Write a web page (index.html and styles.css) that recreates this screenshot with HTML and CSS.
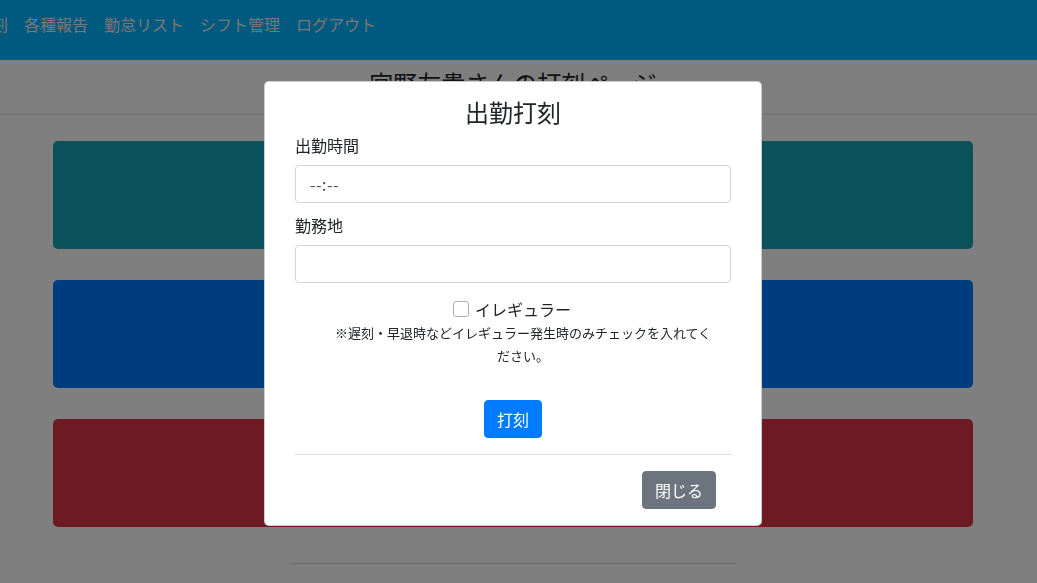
FILE: index.html
```html
<!DOCTYPE html>
<html lang="ja">
<head>
<meta charset="utf-8">
<title>打刻ページ</title>
<link rel="stylesheet" href="styles.css">
</head>
<body>
<nav class="navbar">
  <ul class="nav-list">
    <li class="nav-item">打刻</li>
    <li class="nav-item">各種報告</li>
    <li class="nav-item">勤怠リスト</li>
    <li class="nav-item">シフト管理</li>
    <li class="nav-item">ログアウト</li>
  </ul>
</nav>
<main class="page">
  <header class="page-header">
    <h1 class="page-title">宮野友貴さんの打刻ページ</h1>
  </header>
  <section class="cards">
    <div class="card card-info"></div>
    <div class="card card-primary"></div>
    <div class="card card-danger"></div>
  </section>
  <hr class="page-rule">
</main>

<div class="backdrop"></div>
<div class="modal-layer">
  <div class="modal">
    <h2 class="modal-title">出勤打刻</h2>
    <form class="modal-body">
      <div class="form-group">
        <label class="form-label">出勤時間</label>
        <input class="form-control time-input" type="text" placeholder="--:--">
      </div>
      <div class="form-group">
        <label class="form-label">勤務地</label>
        <input class="form-control" type="text">
      </div>
      <div class="form-check">
        <label class="check-label"><span class="check-box"></span>イレギュラー</label>
        <p class="check-note">※遅刻・早退時などイレギュラー発生時のみチェックを入れてください。</p>
      </div>
      <div class="submit-row">
        <button type="button" class="btn btn-primary">打刻</button>
      </div>
    </form>
    <div class="modal-footer">
      <button type="button" class="btn btn-secondary">閉じる</button>
    </div>
  </div>
</div>
</body>
</html>
```

FILE: styles.css
```css
* { box-sizing: border-box; }

html, body {
  margin: 0;
  padding: 0;
  height: 100%;
  overflow: hidden;
}

body {
  font-family: "Noto Sans CJK JP", "Noto Sans", sans-serif;
  color: #212529;
  background: #ffffff;
  font-size: 16px;
}

.navbar {
  height: 60px;
  background: #00b4ff;
  padding-top: 12px;
}

.nav-list {
  list-style: none;
  margin: 0 0 0 -24px;
  padding: 0;
  display: flex;
  gap: 16px;
}

.nav-item {
  color: #eeeeee;
  font-size: 16px;
  line-height: 24px;
  white-space: nowrap;
}

.page {
  width: 1026px;
}

.page-header {
  width: 1037px;
  border-bottom: 1px solid #dee2e6;
  padding: 8px 11px 16px 0;
  height: 55px;
}

.page-title {
  margin: 0;
  text-align: center;
  font-size: 24px;
  line-height: 29px;
  font-weight: 400;
}

.cards {
  display: flex;
  flex-direction: column;
  gap: 31px;
  padding: 26px 53px 0;
}

.card {
  height: 108px;
  border-radius: 5px;
}
.card-info { background: #17a2b8; }
.card-primary { background: #007bff; }
.card-danger { background: #dc3545; }

.page-rule {
  width: 445px;
  margin: 36px auto 0;
  border: 0;
  border-top: 1px solid #d6d6d6;
}

.backdrop {
  position: fixed;
  inset: 0;
  background: rgba(0, 0, 0, 0.5);
}

.modal-layer {
  position: fixed;
  top: 81px;
  left: 0;
  width: 1026px;
  display: flex;
  justify-content: center;
}

.modal {
  width: 498px;
  background: #fff;
  border: 1px solid rgba(0, 0, 0, 0.2);
  border-radius: 5px;
  padding-top: 15px;
}

.modal-title {
  margin: 0;
  text-align: center;
  font-size: 24px;
  line-height: 29px;
  font-weight: 400;
}

.modal-body {
  margin: 0;
  padding: 7px 30px 0;
}

.form-group {
  margin-bottom: 10px;
}

.form-label {
  display: block;
  font-size: 16px;
  line-height: 24px;
  margin-bottom: 8px;
}

.form-control {
  display: block;
  width: 100%;
  height: 38px;
  padding: 6px 12px;
  font-family: inherit;
  font-size: 16px;
  color: #495057;
  border: 1px solid #ced4da;
  border-radius: 4px;
  background: #fff;
  outline: none;
}

.time-input { padding-left: 14px; }
.time-input::placeholder { color: #495057; opacity: 1; letter-spacing: 0.5px; }

.form-check {
  padding-left: 20px;
  margin-top: 14px;
  text-align: center;
}

.check-label {
  position: relative;
  display: inline-block;
  font-size: 16px;
  line-height: 24px;
}

.check-box {
  position: absolute;
  left: -22px;
  top: 4px;
  width: 16px;
  height: 16px;
  border: 1px solid #a8aeb4;
  border-radius: 3px;
  background: #fff;
}

.check-note {
  margin: 0 auto;
  max-width: 386px;
  font-size: 13px;
  line-height: 23px;
}

.submit-row {
  display: flex;
  justify-content: center;
  padding-top: 33px;
  padding-bottom: 16px;
}

.btn {
  font-family: inherit;
  font-size: 16px;
  line-height: 24px;
  padding: 6px 12px;
  border: 1px solid transparent;
  border-radius: 4px;
  color: #fff;
  cursor: pointer;
}

.btn-primary { background: #007bff; border-color: #007bff; }
.btn-secondary { background: #6c757d; border-color: #6c757d; }

.modal-footer {
  margin: 0 29px;
  border-top: 1px solid #dee2e6;
  padding: 16px;
  display: flex;
  justify-content: flex-end;
}
```
